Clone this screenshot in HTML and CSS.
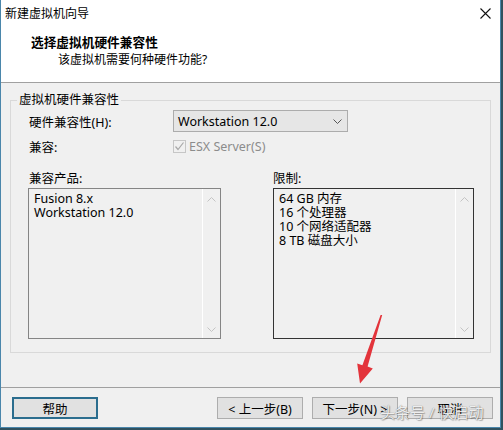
FILE: index.html
```html
<!DOCTYPE html>
<html lang="zh-CN">
<head>
    <meta charset="UTF-8">
    <title>新建虚拟机向导</title>
    <link rel="stylesheet" href="styles.css">
</head>
<body>
    <div class="window">
        <div class="top">
            <div class="titlebar">
                <span class="title">新建虚拟机向导</span>
                <svg class="close" width="11" height="11" viewBox="0 0 11 11">
                    <path d="M0.5 0.5 L10.5 10.5 M10.5 0.5 L0.5 10.5" stroke="#111" stroke-width="1.1" fill="none"/>
                </svg>
            </div>
            <div class="header">
                <h1>选择虚拟机硬件兼容性</h1>
                <p>该虚拟机需要何种硬件功能?</p>
            </div>
        </div>

        <div class="content">
            <fieldset class="group">
                <legend>虚拟机硬件兼容性</legend>
                <div class="group-body">
                    <div class="form-row">
                        <label>硬件兼容性(H):</label>
                        <div class="select">
                            <span>Workstation 12.0</span>
                            <svg width="9" height="5" viewBox="0 0 9 5">
                                <path d="M0.5 0.5 L4.5 4.5 L8.5 0.5" stroke="#555" fill="none"/>
                            </svg>
                        </div>
                    </div>
                    <div class="form-row">
                        <label>兼容:</label>
                        <div class="check">
                            <span class="box">
                                <svg width="11" height="11" viewBox="0 0 11 11">
                                    <path d="M1.5 5.5 L4 8.5 L9.5 1.5" stroke="#a8a8a8" stroke-width="1.2" fill="none"/>
                                </svg>
                            </span>
                            <span class="check-text">ESX Server(S)</span>
                        </div>
                    </div>

                    <div class="lists">
                        <div class="list-col products">
                            <label>兼容产品:</label>
                            <div class="listbox">
                                <ul>
                                    <li>Fusion 8.x</li>
                                    <li>Workstation 12.0</li>
                                </ul>
                                <div class="scrollbar">
                                    <svg width="9" height="5" viewBox="0 0 9 5"><path d="M0.5 4.5 L4.5 0.5 L8.5 4.5" stroke="#c4c4c4" fill="none"/></svg>
                                    <svg width="9" height="5" viewBox="0 0 9 5"><path d="M0.5 0.5 L4.5 4.5 L8.5 0.5" stroke="#c4c4c4" fill="none"/></svg>
                                </div>
                            </div>
                        </div>
                        <div class="list-col limits">
                            <label>限制:</label>
                            <div class="listbox dark">
                                <ul>
                                    <li>64 GB 内存</li>
                                    <li>16 个处理器</li>
                                    <li>10 个网络适配器</li>
                                    <li>8 TB 磁盘大小</li>
                                </ul>
                                <div class="scrollbar">
                                    <svg width="9" height="5" viewBox="0 0 9 5"><path d="M0.5 4.5 L4.5 0.5 L8.5 4.5" stroke="#c4c4c4" fill="none"/></svg>
                                    <svg width="9" height="5" viewBox="0 0 9 5"><path d="M0.5 0.5 L4.5 4.5 L8.5 0.5" stroke="#c4c4c4" fill="none"/></svg>
                                </div>
                            </div>
                        </div>
                    </div>
                </div>
            </fieldset>
        </div>

        <div class="footer">
            <button type="button" class="btn help">帮助</button>
            <div class="nav">
                <button type="button" class="btn">&lt; 上一步(B)</button>
                <button type="button" class="btn">下一步(N) &gt;</button>
                <button type="button" class="btn">取消</button>
            </div>
        </div>

        <!-- annotation drawn on top of the screenshot -->
        <svg class="arrow" width="32" height="74" viewBox="354 312 32 74">
            <polygon points="382.2,315 367.6,366.6 372.8,368.4 360,383.5 357.2,363.4 362.4,365.2 380.6,315" fill="#e3343b"/>
        </svg>
        <div class="watermark">头条号 / 快启动</div>
    </div>
</body>
</html>
```

FILE: styles.css
```css
html {
    background: #30515f;
}

body {
    margin: 0;
    font-family: 'Noto Sans', 'Noto Sans CJK SC', sans-serif;
    font-size: 12.5px;
    color: #000;
}

.window {
    position: relative;
    box-sizing: border-box;
    width: 501px;
    height: 428px;
    display: flex;
    flex-direction: column;
    background: #f0f0f0;
    border-left: 1px solid #4a86ab;
    border-right: 1px solid #4a86ab;
    border-bottom: 1px solid #4a86ab;
}

.top {
    background: #fff;
}

.titlebar {
    height: 26px;
    display: flex;
    align-items: center;
    justify-content: space-between;
    padding: 0 9px 0 4px;
}

.title {
    font-size: 12px;
}

.header {
    box-sizing: border-box;
    height: 57px;
    padding: 7px 0 0 30px;
    border-bottom: 1px solid #a0a0a0;
}

.header h1 {
    margin: 0;
    font-size: 12.7px;
    font-weight: bold;
    line-height: 18px;
}

.header p {
    margin: 0 0 0 27px;
    font-size: 12px;
    line-height: 18px;
}

.content {
    flex: 1;
    padding: 9px 9px 0 9px;
}

.group {
    margin: 0;
    padding: 0;
    border: 1px solid #d9d9d9;
}

.group legend {
    margin-left: 6px;
    padding: 0 2px;
    line-height: 16px;
}

.group-body {
    padding: 2px 15px 13px 18px;
}

.form-row {
    display: flex;
    align-items: center;
    height: 22px;
}

.form-row + .form-row {
    margin-top: 3px;
}

.form-row label {
    width: 144px;
}

.select {
    box-sizing: border-box;
    width: 175px;
    height: 22px;
    display: flex;
    align-items: center;
    justify-content: space-between;
    padding: 0 5px 0 4px;
    background: #e6e6e6;
    border: 1px solid #acacac;
}

.check {
    display: flex;
    align-items: center;
    gap: 3px;
    color: #8c8c8c;
}

.check .box {
    box-sizing: border-box;
    width: 13px;
    height: 13px;
    border: 1px solid #c6c6c6;
    display: flex;
    align-items: center;
    justify-content: center;
}

.lists {
    display: flex;
    gap: 52px;
    margin: 14px 0 0 -1px;
}

.list-col label {
    display: block;
    line-height: 16px;
    margin-bottom: 1px;
}

.products label {
    padding-left: 1px;
}

.products {
    width: 193px;
}

.limits {
    width: 201px;
}

.listbox {
    box-sizing: border-box;
    height: 151px;
    display: flex;
    border: 1px solid #858585;
    background: #f0f0f0;
}

.listbox.dark {
    border-color: #333;
}

.listbox ul {
    flex: 1;
    margin: 0;
    padding: 3px 5px;
    list-style: none;
    line-height: 14px;
}

.scrollbar {
    width: 17px;
    border-left: 1px solid #fff;
    display: flex;
    flex-direction: column;
    align-items: center;
    justify-content: space-between;
    padding: 8px 0 6px;
}

.footer {
    display: flex;
    justify-content: space-between;
    padding: 9px 7px 8px 11px;
    border-top: 1px solid #a0a0a0;
}

.nav {
    display: flex;
    gap: 9px;
}

.btn {
    box-sizing: border-box;
    width: 86px;
    height: 22px;
    padding: 0;
    font-family: inherit;
    font-size: 12.5px;
    color: #000;
    background: #e1e1e1;
    border: 1px solid #adadad;
}

.btn.help {
    border: 2px solid #2b6d8e;
}

.arrow {
    position: absolute;
    left: 353px;
    top: 312px;
    pointer-events: none;
}

.watermark {
    position: absolute;
    left: 379px;
    top: 402px;
    font-size: 15px;
    line-height: 20px;
    color: rgba(255, 255, 255, 0.88);
    text-shadow: 0 0 1px rgba(0, 0, 0, 0.55), 1px 1px 1px rgba(0, 0, 0, 0.25);
    pointer-events: none;
}
```
